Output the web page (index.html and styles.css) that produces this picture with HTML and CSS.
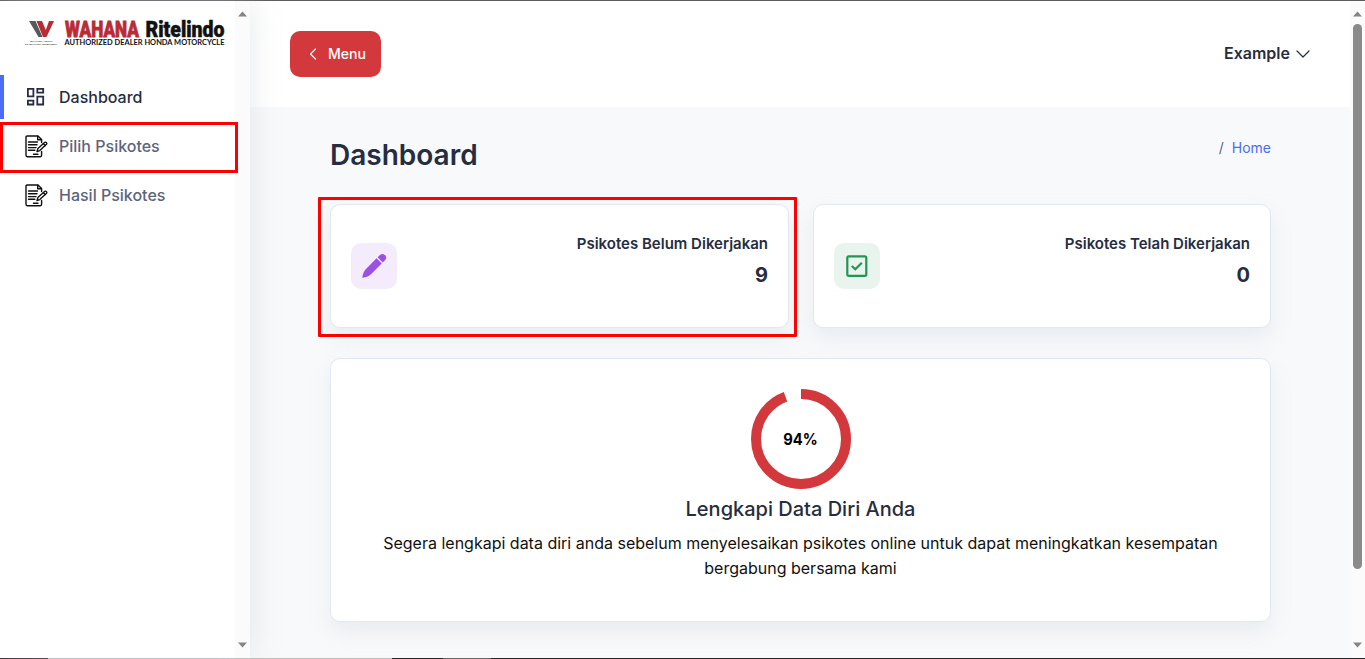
FILE: index.html
```html
<!DOCTYPE html>
<html lang="id">
<head>
<meta charset="utf-8">
<title>Dashboard</title>
<link rel="stylesheet" href="styles.css">
</head>
<body>
<svg class="defs" width="0" height="0">
  <symbol id="form" viewBox="0 0 23 23">
    <g fill="none" stroke="#111" stroke-width="1.4" stroke-linejoin="round" stroke-linecap="round">
      <path d="M16.6 7.5V4.6L13 1H2.2Q1 1 1 2.2V20.3Q1 21.700 2.200 21.700H15.400Q16.600 21.700 16.600 20.300V16.500"/>
      <path d="M12.700 1.200V4.800H16.400"/>
      <path d="M3.500 7H12.500M3.500 9.800H12M3.500 12.600H11M3.500 15.300H9.800M8.500 19.300H13"/>
      <path d="M12 16.500L12.900 13.500L19.800 7.300Q20.600 6.800 21.400 7.600Q22.200 8.500 21.500 9.300L14.800 15.600Z" fill="#fff"/>
      <path d="M18.400 8.700L20.200 10.500"/>
    </g>
  </symbol>
</svg>
<div class="frame">
  <aside class="sidebar">
    <div class="side-content">
      <svg class="logo" width="202" height="30" viewBox="0 0 202 30">
        <path d="M4 3H10.500L17.500 19H13.500Z" fill="#58595b"/>
        <path d="M11.500 3H17L20.800 12L24 3H29L21.500 19H18Z" fill="#b92b35"/>
        <text x="5" y="24.300" textLength="23" lengthAdjust="spacingAndGlyphs" class="logo-tiny">WAHANA ARTHA</text>
        <text x="0" y="27.200" textLength="32" lengthAdjust="spacingAndGlyphs" class="logo-tiny">PT WAHANA RITELINDO</text>
        <text x="40" y="19.300" textLength="74" lengthAdjust="spacingAndGlyphs" class="logo-name red">WAHANA</text>
        <text x="120.500" y="19.300" textLength="79" lengthAdjust="spacingAndGlyphs" class="logo-name">Ritelindo</text>
        <text x="39.500" y="26.800" textLength="160" lengthAdjust="spacingAndGlyphs" class="logo-sub">AUTHORIZED DEALER HONDA MOTORCYCLE</text>
      </svg>
      <nav class="nav">
        <a class="nav-item active">
          <svg width="22" height="22" viewBox="0 0 22 22" fill="none" stroke="#262d42" stroke-width="1.800"><path d="M2.900 2.900H8.400V10.400H2.900ZM12.300 2.900H18.200V6.700H12.300ZM2.900 14.600H8.400V18.500H2.900ZM12.300 10.700H18.200V18.500H12.300Z"/></svg>
          <span>Dashboard</span>
        </a>
        <a class="nav-item marked"><svg width="23" height="23"><use href="#form"/></svg><span>Pilih Psikotes</span></a>
        <a class="nav-item"><svg width="23" height="23"><use href="#form"/></svg><span>Hasil Psikotes</span></a>
      </nav>
    </div>
    <div class="scrollbar">
      <svg width="9" height="6"><path d="M0 5.500H9L4.500 .5Z" fill="#858585"/></svg>
      <svg width="9" height="6"><path d="M0 .5H9L4.500 5.500Z" fill="#858585"/></svg>
    </div>
  </aside>
  <main class="main">
    <header class="header">
      <button class="menu-btn"><svg width="9" height="14" viewBox="0 0 9 14" fill="none" stroke="#fff" stroke-width="1.200" stroke-linecap="round" stroke-linejoin="round"><path d="M6.500 2L1.500 7L6.500 12"/></svg>Menu</button>
      <div class="user">Example<svg width="14" height="9" viewBox="0 0 14 9" fill="none" stroke="#262d3f" stroke-width="1.200" stroke-linecap="round" stroke-linejoin="round"><path d="M1 2L7 8L13 2"/></svg></div>
    </header>
    <section class="content">
      <div class="title-row">
        <h1>Dashboard</h1>
        <div class="crumb"><span>/</span><a>Home</a></div>
      </div>
      <div class="cards">
        <article class="card stat highlighted">
          <div class="stat-icon purple"><svg width="26" height="26" viewBox="0 0 26 26" fill="#9b51e0"><path d="M15.600 5.300L20.700 10.400L10.300 20.900Q7.700 23.800 1.200 24.800Q2.200 18.300 5 15.900Z"/><path d="M16.600 4.300L19 2Q21.500 -.1 24 2.300Q26.400 4.700 24.200 7L21.700 9.400Z"/></svg></div>
          <div class="stat-text"><h6>Psikotes Belum Dikerjakan</h6><strong>9</strong></div>
        </article>
        <article class="card stat">
          <div class="stat-icon green"><svg width="23" height="23" viewBox="0 0 23 23" fill="none" stroke="#219653" stroke-width="2.200"><rect x="1.300" y="1.300" width="19" height="19.500" rx="1.500"/><path d="M5.800 11L9.300 14.300L15.800 7.800"/></svg></div>
          <div class="stat-text"><h6>Psikotes Telah Dikerjakan</h6><strong>0</strong></div>
        </article>
      </div>
      <article class="card progress">
        <svg width="100" height="100" viewBox="0 0 100 100"><circle cx="50" cy="50" r="45" fill="none" stroke="#d3393c" stroke-width="10" pathLength="100" stroke-dasharray="94.400 5.600" transform="rotate(-90 50 50)"/><text x="49.500" y="55.500" text-anchor="middle" textLength="34.500" lengthAdjust="spacingAndGlyphs" class="percent">94%</text></svg>
        <h4>Lengkapi Data Diri Anda</h4>
        <p>Segera lengkapi data diri anda sebelum menyelesaikan psikotes online untuk dapat meningkatkan kesempatan bergabung bersama kami</p>
      </article>
    </section>
  </main>
  <div class="scrollbar page-scroll">
    <svg width="9" height="6"><path d="M0 5.500H9L4.500 .5Z" fill="#858585"/></svg>
    <i class="thumb"></i>
    <svg width="9" height="6"><path d="M0 .5H9L4.500 5.500Z" fill="#858585"/></svg>
  </div>
</div>
<div class="bottom-edge"></div>
</body>
</html>
```
FILE: styles.css
```css
* { box-sizing: border-box; }
body { margin: 0; width: 1365px; height: 659px; overflow: hidden; font-family: Inter, "Liberation Sans", sans-serif; color: #262d3f; background: #f8f9fb; }
.defs { position: absolute; }
svg { display: block; flex: none; }
.frame { display: grid; grid-template-columns: 250px 1fr 15px; height: 658px; border-top: 1px solid #5c5c5e; }
.sidebar { display: flex; background: #fff; box-shadow: 0 0 30px rgba(200, 203, 208, .45); z-index: 1; }
.side-content { width: 235px; padding-top: 17px; }
.logo { margin-left: 25px; overflow: visible; }
.logo-name { font: 900 22px Roboto, sans-serif; fill: #111; stroke: #111; stroke-width: .5px; }
.logo-name.red { fill: #b92b35; stroke: #b92b35; stroke-width: .8px; }
.logo-sub { font: 700 6.500px Lato, sans-serif; fill: #111; }
.logo-tiny { font: bold 2.500px "Liberation Sans", sans-serif; fill: #333; }
.nav { padding-top: 27px; }
.nav-item { display: flex; align-items: center; gap: 11px; width: 238px; height: 49px; padding-left: 25px; font-size: 16px; font-weight: 500; color: #5d657b; }
.nav-item.active { gap: 12px; height: 44px; margin: 0 0 4px; padding-left: 21px; border-left: 4px solid #4a6cf7; border-radius: 0 3px 3px 0; color: #262d3f; }
.nav-item.marked { position: relative; z-index: 1; height: 51px; margin: -1px 0; padding: 0 0 3px 22px; border: 3px solid #f00; }
.nav-item.marked + .nav-item { height: 46px; }
.scrollbar { display: flex; flex-direction: column; align-items: center; justify-content: space-between; width: 15px; padding: 10px 0; background: #fbfbfb; }
.page-scroll { justify-content: flex-start; }
.page-scroll svg:last-child { margin-top: auto; }
.thumb { width: 9px; height: 545px; margin-top: 7px; border-radius: 5px; background: #8a8a8a; }
.main { min-width: 0; }
.header { display: flex; align-items: center; justify-content: space-between; height: 106px; padding: 0 40px; background: #fff; }
.menu-btn { display: flex; align-items: center; gap: 10px; width: 91px; height: 46px; padding: 0 0 1px 19px; border: 0; border-radius: 10px; background: #d3393c; color: #fff; font: 500 14px Inter, sans-serif; }
.user { display: flex; align-items: center; gap: 6px; padding-bottom: 2px; font-size: 16px; font-weight: 600; }
.content { padding: 30px 79px 0 80px; }
.title-row { display: flex; justify-content: space-between; height: 67px; }
h1 { margin: 0; font-size: 28px; line-height: 36px; font-weight: 600; }
.crumb { display: flex; gap: 8px; font-size: 14px; line-height: 22px; color: #5d657b; }
.crumb a { color: #4a6cf7; }
.cards { display: grid; grid-template-columns: 459px 458px; gap: 24px; margin-bottom: 30px; }
.card { border: 1px solid #e2e8f0; border-radius: 10px; background: #fff; box-shadow: 0 10px 20px rgba(200, 208, 216, .3); }
.stat { display: flex; align-items: center; justify-content: space-between; height: 124px; padding: 0 20px; position: relative; }
.highlighted::after { content: ""; position: absolute; inset: -8px -9px -10px -13px; border: 3px solid #f00; border-radius: 1px; }
.stat-icon { display: grid; place-items: center; width: 46px; height: 46px; border-radius: 10px; }
.purple { background: #f4ecfc; }
.green { background: #e9f4ee; }
.stat-text { text-align: right; padding-bottom: 11px; }
h6 { margin: 0 0 10px; font-size: 15px; line-height: 18px; font-weight: 600; }
.stat-text strong { display: block; font-size: 20px; line-height: 24px; font-weight: 700; }
.progress { display: flex; flex-direction: column; align-items: center; height: 264px; padding: 30px 30px 0; }
.percent { font: bold 15.500px Inter, sans-serif; fill: #000; }
h4 { margin: 7px 0 9px; font-size: 20px; line-height: 26px; font-weight: 500; }
.progress p { margin: 0; width: 860px; font-size: 16px; line-height: 25px; text-align: center; color: #111; }
.bottom-edge { height: 1px; background: linear-gradient(90deg, #33202b 48px, #bcbcbc 48px 392px, #252528 392px 443px, #666 443px 491px, #252528 491px); }
```
